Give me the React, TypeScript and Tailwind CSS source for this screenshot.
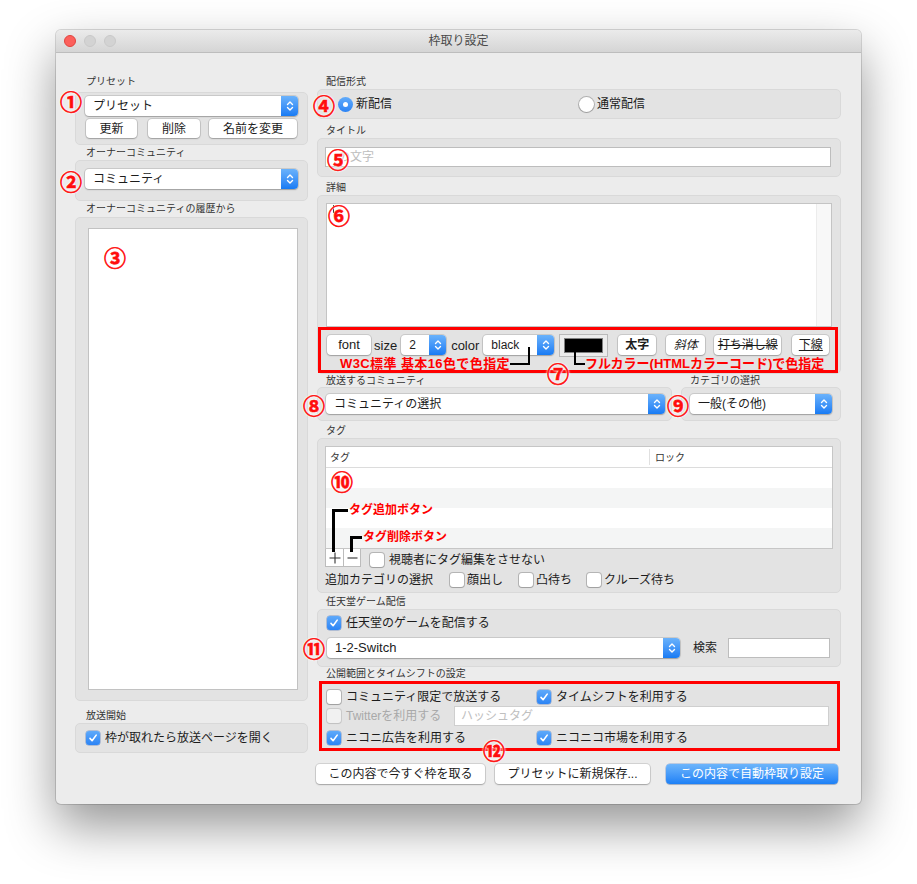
import React from "react";

function Chevrons() {
  return (
    <svg width="8" height="12" viewBox="0 0 8 12" fill="none" stroke="white" strokeWidth="1.4" strokeLinecap="round" strokeLinejoin="round">
      <path d="M1.5 4.6 4 2.1 6.5 4.6" />
      <path d="M1.5 7.4 4 9.9 6.5 7.4" />
    </svg>
  );
}

function Select({ label, className = "", textClass = "text-[12px]" }: { label: string; className?: string; textClass?: string }) {
  return (
    <div className={`flex h-[20px] items-stretch rounded-[4px] bg-white shadow-[0_0_0_1px_rgba(0,0,0,0.11),0_1px_1.5px_rgba(0,0,0,0.22)] ${className}`}>
      <div className={`flex flex-1 items-center pl-[8px] text-[#1c1c1c] ${textClass}`}>{label}</div>
      <div className="flex w-[17px] items-center justify-center rounded-r-[4px] bg-linear-to-b from-[#6ab2fb] to-[#167bf4]">
        <Chevrons />
      </div>
    </div>
  );
}

function Btn({ children, className = "" }: { children: React.ReactNode; className?: string }) {
  return (
    <div className={`flex items-center justify-center rounded-[4px] bg-white text-[12px] text-[#1c1c1c] shadow-[0_0_0_1px_rgba(0,0,0,0.11),0_1px_1.5px_rgba(0,0,0,0.22)] ${className}`}>
      {children}
    </div>
  );
}

function Check({ on, disabled }: { on?: boolean; disabled?: boolean }) {
  if (on)
    return (
      <span className="flex h-[14px] w-[14px] shrink-0 items-center justify-center rounded-[3px] bg-linear-to-b from-[#5ea9fa] to-[#2b84f5] shadow-[0_0_0_0.5px_rgba(0,60,160,0.45)]">
        <svg width="10" height="10" viewBox="0 0 10 10">
          <path d="M2 5.4 4.1 7.7 8.2 2.1" stroke="white" strokeWidth="1.6" fill="none" strokeLinecap="round" strokeLinejoin="round" />
        </svg>
      </span>
    );
  return (
    <span
      className={`h-[14px] w-[14px] shrink-0 rounded-[3px] bg-white shadow-[0_0_0_1px_rgba(0,0,0,0.2),0_1px_1px_rgba(0,0,0,0.12)] ${disabled ? "opacity-50" : ""}`}
    />
  );
}

function Radio({ on }: { on?: boolean }) {
  if (on)
    return (
      <span className="flex h-[15px] w-[15px] shrink-0 items-center justify-center rounded-full bg-linear-to-b from-[#62abfa] to-[#2a83f5]">
        <span className="h-[5px] w-[5px] rounded-full bg-white" />
      </span>
    );
  return <span className="h-[15px] w-[15px] shrink-0 rounded-full bg-white shadow-[0_0_0_1px_rgba(0,0,0,0.22),0_1px_1px_rgba(0,0,0,0.12)]" />;
}

const numCls =
  "absolute flex h-[24px] w-[24px] items-center justify-center font-['Noto_Sans_CJK_JP',sans-serif] text-[22px] font-bold leading-none text-[#ff0d0d] [-webkit-text-stroke:0.6px_#ff0d0d] [text-shadow:0_0_2px_#fff,0_0_2px_#fff,0_0_2px_#fff,0_0_3px_#fff]";
const noteCls = "absolute whitespace-nowrap font-bold leading-[14px] text-[#ff0000]";

export default function App() {
  return (
    <div className="relative h-[884px] w-[917px] overflow-hidden bg-white pl-[56px] pt-[30px] font-['Liberation_Sans','Noto_Sans_CJK_JP',sans-serif] text-[#1c1c1c]">
      <div className="flex h-[774px] w-[805px] flex-col overflow-hidden rounded-[5px] bg-[#ececec] shadow-[0_22px_50px_rgba(0,0,0,0.42),0_0_0_1px_rgba(0,0,0,0.14)]">
        {/* title bar */}
        <div className="grid h-[23px] shrink-0 grid-cols-[1fr_auto_1fr] items-center border-b border-[#bdbdbd] bg-linear-to-b from-[#ebebeb] to-[#d5d5d5]">
          <div className="flex gap-[8px] pl-[8px]">
            <span className="h-[12px] w-[12px] rounded-full border border-[#e0443e] bg-[#fc605c]" />
            <span className="h-[12px] w-[12px] rounded-full border border-[#c9c9c9] bg-[#d3d3d3]" />
            <span className="h-[12px] w-[12px] rounded-full border border-[#c9c9c9] bg-[#d3d3d3]" />
          </div>
          <div className="text-[12px] text-[#4a4a4a]">枠取り設定</div>
          <div />
        </div>

        {/* body */}
        <div className="flex gap-[9px] pl-[19px] pt-[21px]">
          {/* left column */}
          <div className="flex w-[233px] flex-col">
            <div className="h-[16px] pl-[11px] text-[10px] leading-[16px] text-[#333]">プリセット</div>
            <div className="mt-[2px] flex h-[53px] flex-col gap-[3px] rounded-[5px] border border-[#d9d9d9] bg-[#e3e3e3] pl-[9px] pt-[3px]">
              <Select label="プリセット" className="w-[213px]" />
              <div className="flex">
                <Btn className="ml-[1px] h-[19px] w-[51px]">更新</Btn>
                <Btn className="ml-[11px] h-[19px] w-[52px]">削除</Btn>
                <Btn className="ml-[9px] h-[19px] w-[88px]">名前を変更</Btn>
              </div>
            </div>
            <div className="h-[15px] pl-[11px] text-[10px] leading-[15px] text-[#333]">オーナーコミュニティ</div>
            <div className="h-[41px] rounded-[5px] border border-[#d9d9d9] bg-[#e3e3e3] pl-[9px] pt-[8px]">
              <Select label="コミュニティ" className="w-[213px]" />
            </div>
            <div className="h-[16px] pl-[11px] text-[10px] leading-[16px] text-[#333]">オーナーコミュニティの履歴から</div>
            <div className="h-[484px] rounded-[5px] border border-[#d9d9d9] bg-[#e3e3e3] pl-[12px] pt-[10px]">
              <div className="h-[462px] w-[210px] border border-[#c2c2c2] bg-white" />
            </div>
            <div className="h-[22px] pl-[11px] pt-[8px] text-[10px] leading-[14px] text-[#333]">放送開始</div>
            <div className="flex h-[30px] items-center gap-[5px] rounded-[5px] border border-[#d9d9d9] bg-[#e3e3e3] pl-[10px] text-[12px]">
              <Check on />
              <span>枠が取れたら放送ページを開く</span>
            </div>
          </div>

          {/* right column */}
          <div className="flex w-[524px] flex-col">
            <div className="h-[15px] pl-[9px] text-[10px] leading-[15px] text-[#333]">配信形式</div>
            <div className="flex h-[30px] items-center rounded-[5px] border border-[#d9d9d9] bg-[#e3e3e3] pl-[20px] text-[12px]">
              <div className="flex w-[241px] items-center gap-[3px]">
                <Radio on />
                <span>新配信</span>
              </div>
              <div className="flex items-center gap-[3px]">
                <Radio />
                <span>通常配信</span>
              </div>
            </div>
            <div className="h-[19px] pl-[9px] pt-[4px] text-[10px] leading-[15px] text-[#333]">タイトル</div>
            <div className="h-[39px] rounded-[5px] border border-[#d9d9d9] bg-[#e3e3e3] pl-[7px] pt-[8px]">
              <div className="flex h-[20px] w-[506px] items-center border border-[#bdbdbd] bg-white pl-[12px] text-[12px] text-[#bdbdbd]">の文字</div>
            </div>
            <div className="h-[18px] pl-[9px] pt-[3px] text-[10px] leading-[15px] text-[#333]">詳細</div>
            <div className="flex h-[179px] flex-col rounded-[5px] border border-[#d9d9d9] bg-[#e3e3e3] pt-[7px]">
              <div className="ml-[8px] flex h-[124px] w-[506px] border border-[#c4c4c4] bg-white">
                <div className="flex-1 pl-[6px] pt-[1px]">
                  <div className="h-[8px] w-[1px] bg-black" />
                </div>
                <div className="w-[15px] border-l border-[#ececec] bg-[#f8f8f8]" />
              </div>
              <div className="flex h-[46px] w-[520px] items-start border-[3px] border-[#ff0000] pl-[6px] pt-[5px]">
                <Btn className="h-[20px] w-[44px] text-[13px]">font</Btn>
                <span className="ml-[3px] mt-[1px] text-[13px]">size</span>
                <Select label="2" className="ml-[4px] w-[45px]" />
                <span className="ml-[5px] mt-[1px] text-[13px]">color</span>
                <Select label="black" className="ml-[4px] w-[71px]" />
                <div className="ml-[5px] -mt-[1px] flex h-[23px] w-[49px] items-center justify-center border border-[#b9b9b9] bg-[#ececec]">
                  <div className="h-[15px] w-[39px] border border-[#808080] bg-black" />
                </div>
                <Btn className="ml-[10px] h-[20px] w-[38px] font-bold">太字</Btn>
                <Btn className="ml-[10px] h-[20px] w-[39px] italic">斜体</Btn>
                <Btn className="ml-[9px] h-[20px] w-[67px] line-through">打ち消し線</Btn>
                <Btn className="ml-[11px] h-[20px] w-[37px] underline">下線</Btn>
              </div>
            </div>
            <div className="grid h-[13px] grid-cols-[355px_160px] gap-x-[9px] text-[10px] leading-[13px] text-[#333]">
              <div className="pl-[9px]">放送するコミュニティ</div>
              <div className="pl-[9px]">カテゴリの選択</div>
            </div>
            <div className="grid h-[34px] grid-cols-[355px_160px] gap-x-[9px]">
              <div className="flex items-center rounded-[5px] border border-[#d9d9d9] bg-[#e3e3e3] pl-[8px]">
                <Select label="コミュニティの選択" className="w-[339px]" />
              </div>
              <div className="flex items-center rounded-[5px] border border-[#d9d9d9] bg-[#e3e3e3] pl-[8px]">
                <Select label="一般(その他)" className="w-[142px]" />
              </div>
            </div>
            <div className="h-[17px] pl-[9px] pt-[2px] text-[10px] leading-[15px] text-[#333]">タグ</div>
            <div className="flex h-[155px] flex-col rounded-[5px] border border-[#d9d9d9] bg-[#e3e3e3] pl-[7px] pt-[7px]">
              <div className="flex w-[508px] flex-col border border-[#c6c6c6] bg-white">
                <div className="flex h-[21px] items-center border-b border-[#dcdcdc] text-[10px] text-[#333]">
                  <div className="w-[323px] pl-[4px]">タグ</div>
                  <div className="h-[16px] w-[1px] bg-[#e0e0e0]" />
                  <div className="pl-[5px]">ロック</div>
                </div>
                <div className="h-[20px] bg-white" />
                <div className="h-[20px] bg-[#f4f5f5]" />
                <div className="h-[20px] bg-white" />
                <div className="h-[20px] bg-[#f4f5f5]" />
              </div>
              <div className="flex h-[18px] items-center">
                <div className="flex h-[18px] items-center border border-t-0 border-[#bcbcbc] bg-white">
                  <span className="flex h-[17px] w-[17px] items-center justify-center">
                    <svg width="12" height="12" viewBox="0 0 12 12" stroke="#333" strokeWidth="1.1">
                      <path d="M6 0.5V11.5M0.5 6H11.5" />
                    </svg>
                  </span>
                  <span className="h-[17px] w-[1px] bg-[#bcbcbc]" />
                  <span className="flex h-[17px] w-[16px] items-center justify-center">
                    <svg width="11" height="12" viewBox="0 0 11 12" stroke="#333" strokeWidth="1.1">
                      <path d="M0.5 6H10.5" />
                    </svg>
                  </span>
                </div>
                <div className="ml-[9px] mt-[3px] flex items-center gap-[5px] text-[12px]">
                  <Check />
                  <span>視聴者にタグ編集をさせない</span>
                </div>
              </div>
              <div className="mt-[5px] flex h-[16px] items-center text-[12px]">
                <span className="w-[125px]">追加カテゴリの選択</span>
                <Check />
                <span className="ml-[3px] w-[52px]">顔出し</span>
                <Check />
                <span className="ml-[3px] w-[51px]">凸待ち</span>
                <Check />
                <span className="ml-[3px]">クルーズ待ち</span>
              </div>
            </div>
            <div className="h-[16px] pl-[9px] pt-[1px] text-[10px] leading-[15px] text-[#333]">任天堂ゲーム配信</div>
            <div className="flex h-[58px] flex-col rounded-[5px] border border-[#d9d9d9] bg-[#e3e3e3] pl-[9px] pt-[6px]">
              <div className="flex h-[14px] items-center gap-[5px] text-[12px]">
                <Check on />
                <span>任天堂のゲームを配信する</span>
              </div>
              <div className="mt-[8px] flex items-center">
                <Select label="1-2-Switch" className="w-[353px]" textClass="text-[13px]" />
                <span className="ml-[13px] w-[35px] text-[12px]">検索</span>
                <div className="h-[20px] w-[102px] border border-[#bdbdbd] bg-white" />
              </div>
            </div>
            <div className="h-[14px] pl-[9px] text-[10px] leading-[14px] text-[#333]">公開範囲とタイムシフトの設定</div>
            <div className="ml-[2px] h-[70px] w-[521px] border-[3px] border-[#ff0000] bg-[#e3e3e3] pl-[5px] pt-[6px] text-[12px]">
              <div className="flex h-[14px] items-center">
                <div className="flex w-[210px] items-center gap-[5px]">
                  <Check />
                  <span>コミュニティ限定で放送する</span>
                </div>
                <div className="flex items-center gap-[5px]">
                  <Check on />
                  <span>タイムシフトを利用する</span>
                </div>
              </div>
              <div className="mt-[2px] flex h-[20px] items-center">
                <Check disabled />
                <span className="ml-[5px] w-[108px] text-[#a9a9a9]">Twitterを利用する</span>
                <div className="flex h-[20px] w-[375px] items-center border border-[#cfcfcf] bg-white pl-[6px] text-[#c0c0c0]">ハッシュタグ</div>
              </div>
              <div className="mt-[5px] flex h-[14px] items-center">
                <div className="flex w-[210px] items-center gap-[5px]">
                  <Check on />
                  <span>ニコニ広告を利用する</span>
                </div>
                <div className="flex items-center gap-[5px]">
                  <Check on />
                  <span>ニコニコ市場を利用する</span>
                </div>
              </div>
            </div>
            <div className="mt-[13px] flex">
              <Btn className="-ml-[1px] h-[20px] w-[169px]">この内容で今すぐ枠を取る</Btn>
              <Btn className="ml-[10px] h-[20px] w-[155px]">プリセットに新規保存...</Btn>
              <div className="ml-[16px] flex h-[20px] w-[172px] items-center justify-center rounded-[4px] bg-linear-to-b from-[#6cb5fb] to-[#1b80f6] text-[12px] text-white shadow-[0_0_0_0.5px_rgba(0,70,180,0.4),0_1px_1px_rgba(0,0,0,0.15)]">
                この内容で自動枠取り設定
              </div>
            </div>
          </div>
        </div>
      </div>

      {/* annotation overlays */}
      <span className={`${numCls} left-[59px] top-[88px]`}>①</span>
      <span className={`${numCls} left-[59px] top-[168px]`}>②</span>
      <span className={`${numCls} left-[103px] top-[244px]`}>③</span>
      <span className={`${numCls} left-[312px] top-[92px]`}>④</span>
      <span className={`${numCls} left-[326px] top-[146px]`}>⑤</span>
      <span className={`${numCls} left-[327px] top-[202px]`}>⑥</span>
      <span className={`${numCls} left-[546px] top-[360px]`}>⑦</span>
      <span className={`${numCls} left-[302px] top-[392px]`}>⑧</span>
      <span className={`${numCls} left-[666px] top-[392px]`}>⑨</span>
      <span className={`${numCls} left-[330px] top-[468px]`}>⑩</span>
      <span className={`${numCls} left-[302px] top-[635px]`}>⑪</span>
      <span className={`${numCls} left-[482px] top-[737px]`}>⑫</span>

      <span className={`${noteCls} left-[340px] top-[357px] text-[13px] tracking-[0.4px]`}>W3C標準 基本16色で色指定</span>
      <div className="absolute left-[510px] top-[363px] h-[2px] w-[20px] bg-black" />
      <div className="absolute left-[528px] top-[347px] h-[18px] w-[2px] bg-black" />
      <span className={`${noteCls} left-[585px] top-[357px] text-[13px]`}>フルカラー(HTMLカラーコード)で色指定</span>
      <div className="absolute left-[574px] top-[348px] h-[17px] w-[2px] bg-black" />
      <div className="absolute left-[574px] top-[363px] h-[2px] w-[11px] bg-black" />

      <span className={`${noteCls} left-[349px] top-[503px] text-[12px]`}>タグ追加ボタン</span>
      <div className="absolute left-[332px] top-[509px] h-[3px] w-[16px] bg-black" />
      <div className="absolute left-[332px] top-[509px] h-[43px] w-[3px] bg-black" />
      <span className={`${noteCls} left-[363px] top-[530px] text-[12px]`}>タグ削除ボタン</span>
      <div className="absolute left-[350px] top-[536px] h-[3px] w-[12px] bg-black" />
      <div className="absolute left-[350px] top-[536px] h-[16px] w-[3px] bg-black" />
    </div>
  );
}
